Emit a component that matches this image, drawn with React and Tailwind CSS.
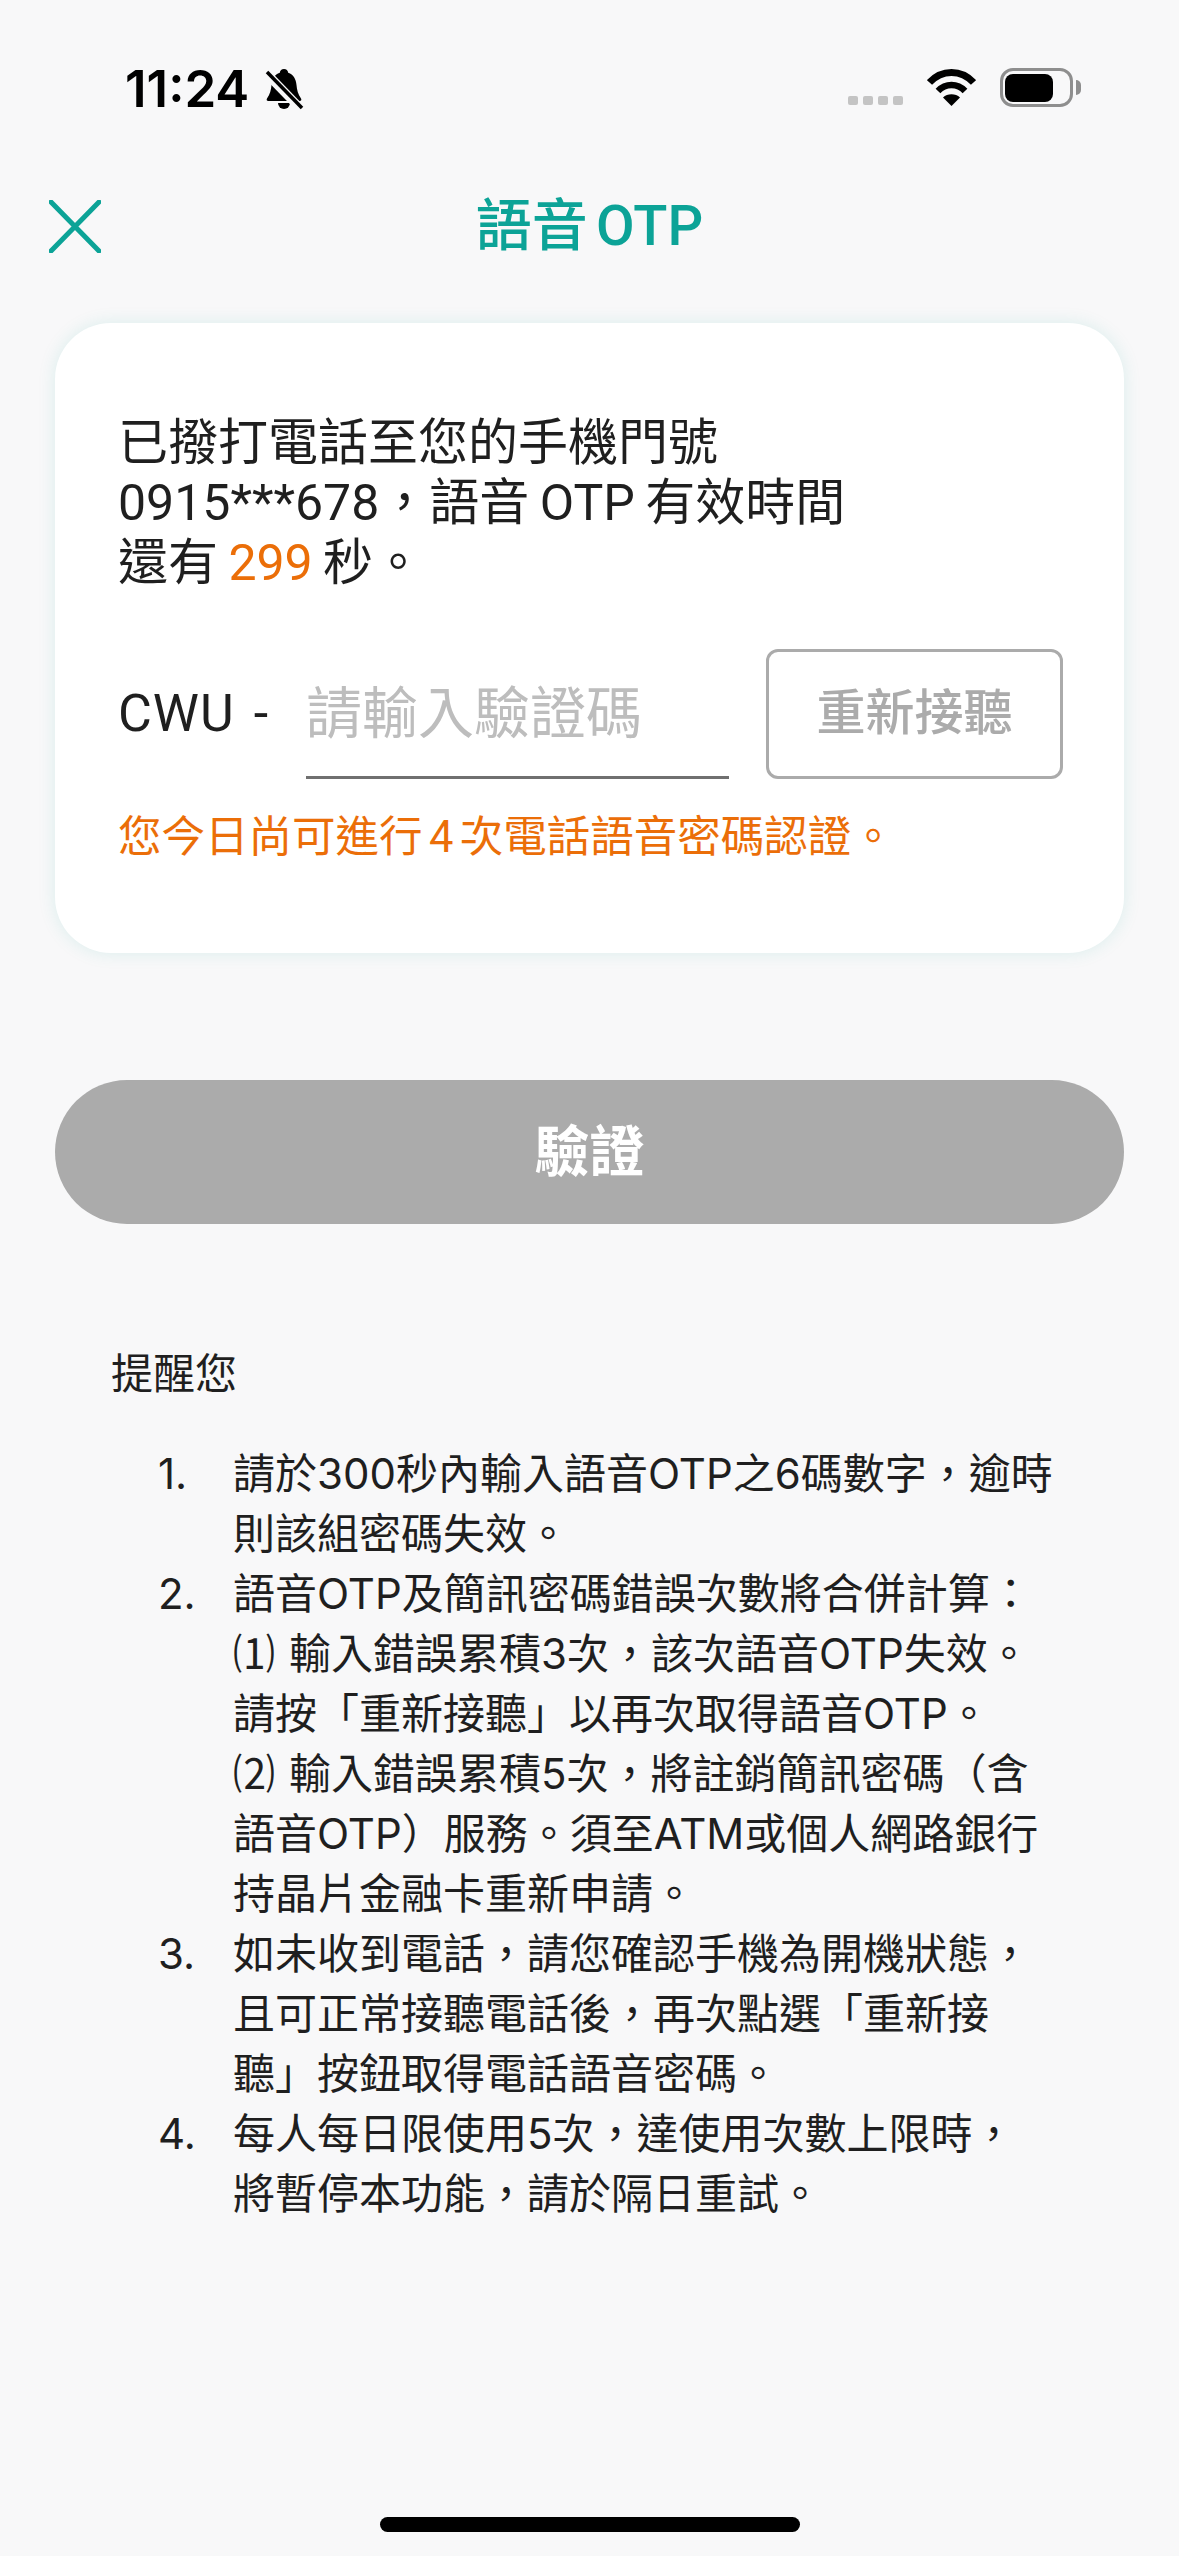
const FONT = "font-['Roboto','Noto_Sans_CJK_TC',sans-serif]";

const NOTES = [
  {
    no: "1.",
    lines: ["請於300秒內輸入語音OTP之6碼數字，逾時", "則該組密碼失效。"],
  },
  {
    no: "2.",
    lines: [
      "語音OTP及簡訊密碼錯誤次數將合併計算：",
      "⑴\u2004輸入錯誤累積3次，該次語音OTP失效。",
      "請按「重新接聽」以再次取得語音OTP。",
      "⑵\u2004輸入錯誤累積5次，將註銷簡訊密碼（含",
      "語音OTP）服務。須至ATM或個人網路銀行",
      "持晶片金融卡重新申請。",
    ],
  },
  {
    no: "3.",
    lines: [
      "如未收到電話，請您確認手機為開機狀態，",
      "且可正常接聽電話後，再次點選「重新接",
      "聽」按鈕取得電話語音密碼。",
    ],
  },
  {
    no: "4.",
    lines: ["每人每日限使用5次，達使用次數上限時，", "將暫停本功能，請於隔日重試。"],
  },
];

function StatusBar() {
  return (
    <div className="flex h-[170px] items-start justify-between pl-[125px] pr-[98px] pt-[61px]">
      <div className="flex items-center gap-[15px]">
        <span className="font-['Inter',sans-serif] text-[51px] leading-[56px] font-semibold text-black">11:24</span>
        <svg width="40" height="42" viewBox="0 0 40 42">
          <path d="M20 1c2.400 0 4 1.700 4.200 3.800C29.400 6.500 32 11 32.500 17c.4 5 1.500 9 4.500 13.500.8 1.300.2 2.500-1.300 2.500H4.300c-1.500 0-2.100-1.200-1.300-2.500C6 26 7.100 22 7.500 17 8 11 10.600 6.500 15.800 4.800 16 2.700 17.600 1 20 1z" fill="#000" />
          <path d="M14 35h12a6 6 0 0 1-12 0z" fill="#000" />
          <path d="M1 4l36 37" stroke="#f8f8f9" strokeWidth="9" />
          <path d="M3 4l35 36" stroke="#000" strokeWidth="3.500" />
        </svg>
      </div>
      <div className="flex items-start">
        <div className="mt-[35px] mr-[24px] flex gap-[5px]">
          <span className="h-[9px] w-[10px] rounded-[2px] bg-[#c4c4c4]" />
          <span className="h-[9px] w-[10px] rounded-[2px] bg-[#c4c4c4]" />
          <span className="h-[9px] w-[10px] rounded-[2px] bg-[#c4c4c4]" />
          <span className="h-[9px] w-[10px] rounded-[2px] bg-[#c4c4c4]" />
        </div>
        <svg className="mt-[8px] mr-[24px]" width="49" height="37" viewBox="0 0 49 37">
          <path d="M2.500 13.500C8.500 7 16 3.500 24.500 3.500S40.500 7 46.500 13.500" fill="none" stroke="#000" strokeWidth="7" />
          <path d="M11 22c3.600-3.800 8.200-6 13.500-6S34.400 18.200 38 22" fill="none" stroke="#000" strokeWidth="6.500" />
          <path d="M24.500 37l-8.500-8.500c2.300-2 5.200-3.200 8.500-3.200s6.200 1.200 8.500 3.200z" fill="#000" />
        </svg>
        <div className="mt-[7px] flex items-center">
          <div className="flex h-[39px] w-[73px] items-center rounded-[13px] border-[3px] border-[#8e8e8e] pl-[2px]">
            <div className="h-[28px] w-[48px] rounded-[8px] bg-black" />
          </div>
          <div className="ml-[3px] h-[15px] w-[5px] rounded-r-full bg-[#8e8e8e]" />
        </div>
      </div>
    </div>
  );
}

export default function App() {
  return (
    <div className={`${FONT} flex h-[2556px] w-[1179px] flex-col overflow-hidden bg-[#f8f8f9] text-[#1f1f1f]`}>
      <StatusBar />

      {/* Nav */}
      <div className="mt-[30px] grid h-[53px] grid-cols-[1fr_auto_1fr] items-center pl-[49px] pr-[49px]">
        <svg width="52" height="53" viewBox="0 0 52 53">
          <path d="M2 2l48 49M50 2L2 51" fill="none" stroke="#0ca397" strokeWidth="5" strokeLinecap="round" />
        </svg>
        <span className="text-[56px] leading-[53px] font-medium [word-spacing:-0.1em] text-[#0ca397]">語音 OTP</span>
        <span />
      </div>

      {/* Card */}
      <div className="mx-[55px] mt-[70px] h-[630px] rounded-[56px] bg-white pl-[63px] pr-[60px] pt-[90px] shadow-[0_0_18px_rgba(12,163,151,0.12)]">
        <p className="text-[50px] leading-[60px] [word-spacing:-0.04em]">
          已撥打電話至您的手機門號
          <br />
          0915***678，語音 OTP 有效時間
          <br />
          還有 <span className="text-[#eb6e08]">299</span> 秒。
        </p>

        <div className="mt-[56px] flex h-[130px] items-stretch">
          <span className="flex w-[188px] shrink-0 items-center text-[52px] tracking-[1px] [word-spacing:0.1em]">CWU -</span>
          <div className="flex w-[423px] shrink-0 items-center border-b-[3px] border-[#707070] pt-[3px] text-[56px] text-[#bdbdbd]">
            請輸入驗證碼
          </div>
          <div className="ml-[37px] flex w-[297px] shrink-0 items-center justify-center rounded-[12px] border-[3px] border-[#ababab] text-[49px] font-medium text-[#ababab]">
            重新接聽
          </div>
        </div>

        <p className="mt-[29px] text-[43.500px] leading-[60px] [word-spacing:-0.1em] text-[#eb6e08]">您今日尚可進行 4 次電話語音密碼認證。</p>
      </div>

      <div className="mx-[55px] mt-[127px] flex h-[144px] items-center justify-center rounded-full bg-[#ababab] text-[55px] font-bold text-white">
        驗證
      </div>

      {/* Notes */}
      <div className="mt-[120px] pl-[111px] pr-[120px] font-['Inter','Noto_Sans_CJK_TC',sans-serif] text-[42px] leading-[60px]">
        <p>提醒您</p>
        <ol className="mt-[40px]">
          {NOTES.map((note) => (
            <li key={note.no} className="flex">
              <span className="w-[122px] shrink-0 pl-[47px]">{note.no}</span>
              <span className="whitespace-nowrap">
                {note.lines.map((line) => (
                  <span key={line} className="block">{line}</span>
                ))}
              </span>
            </li>
          ))}
        </ol>
      </div>

      <div className="mt-auto mb-[24px] h-[15px] w-[420px] self-center rounded-full bg-black" />
    </div>
  );
}
